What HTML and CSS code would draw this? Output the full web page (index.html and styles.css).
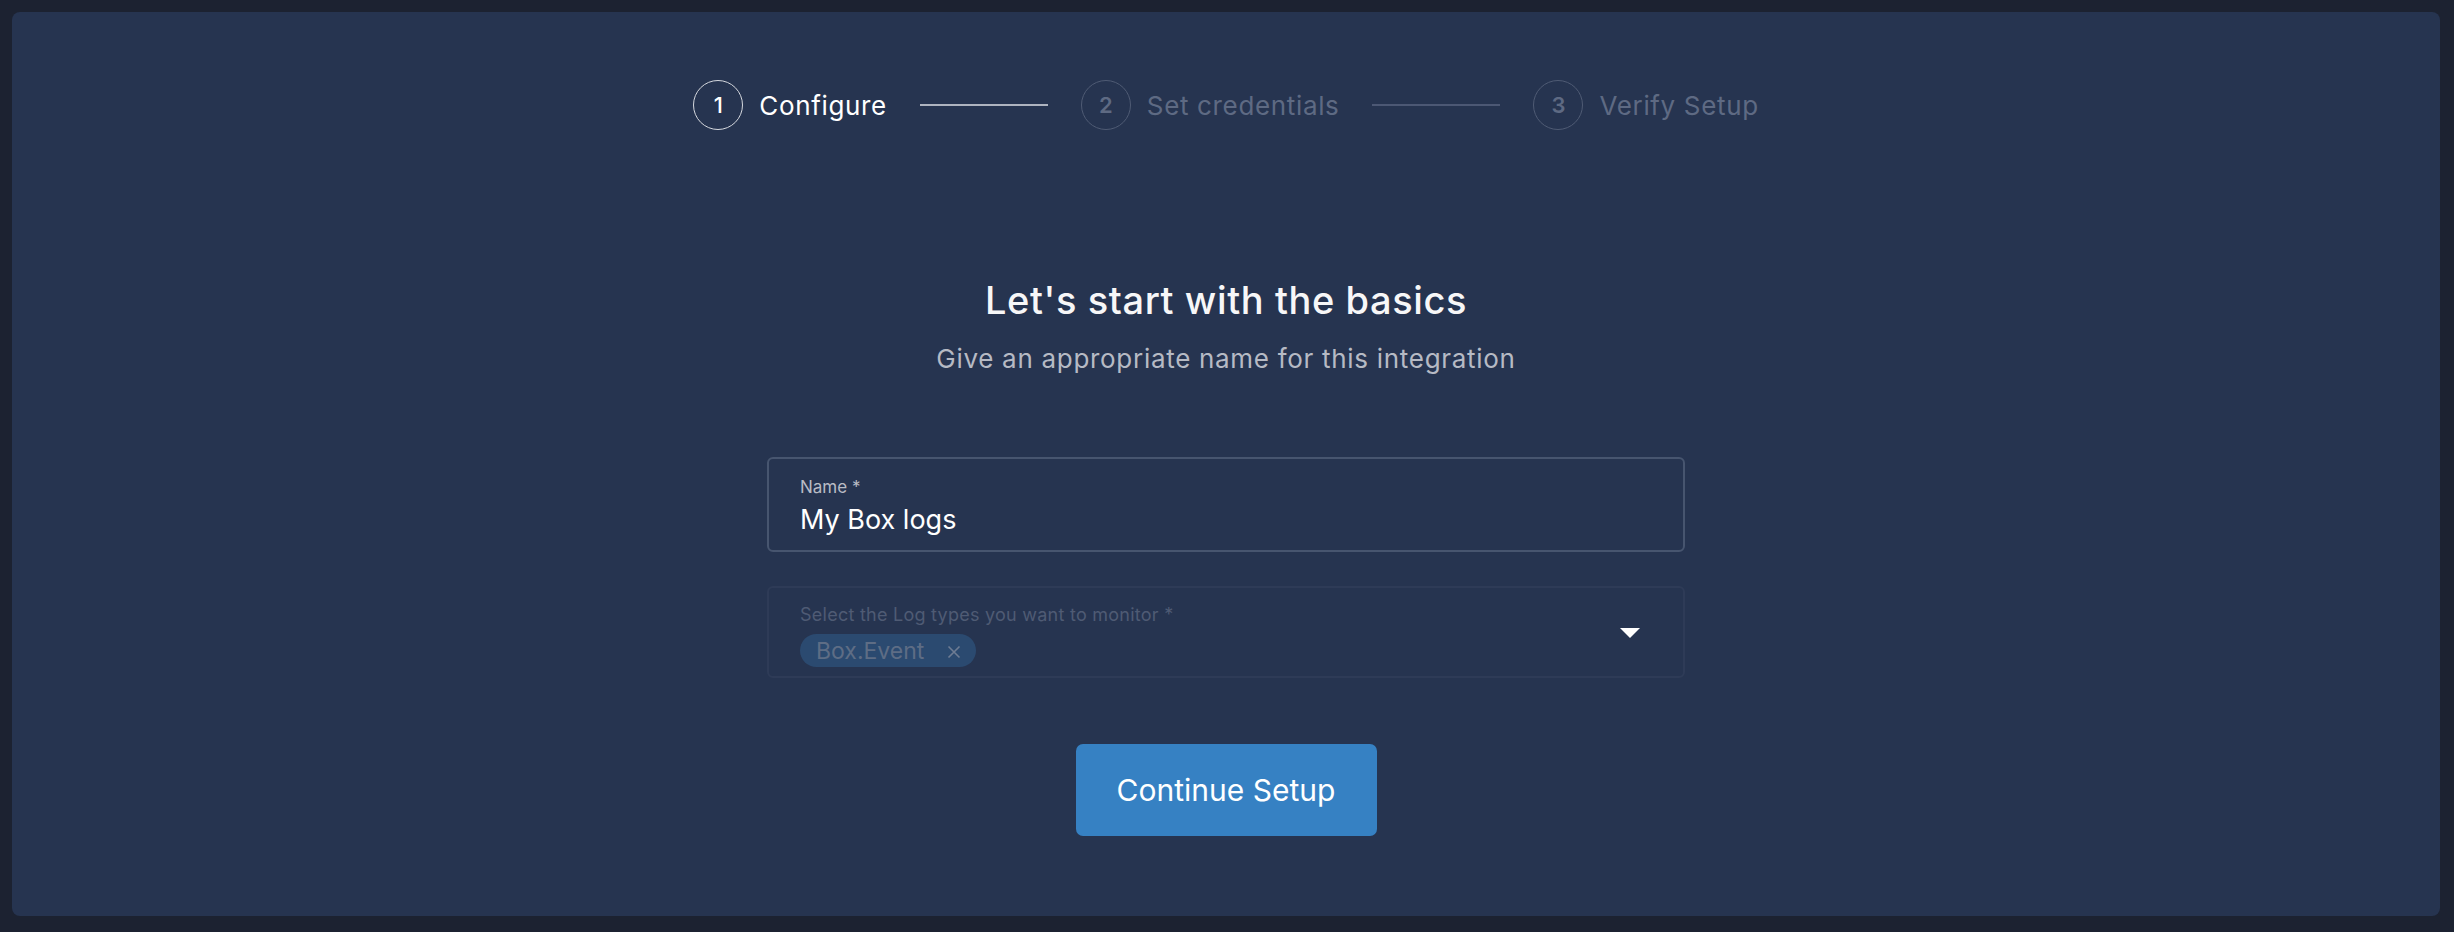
FILE: index.html
```html
<!DOCTYPE html>
<html lang="en">
<head>
<meta charset="utf-8">
<title>Configure integration</title>
<link rel="stylesheet" href="styles.css">
</head>
<body>
<main class="panel">
  <nav class="stepper">
    <div class="step active"><span class="step-num">1</span><span class="step-label">Configure</span></div>
    <span class="step-line done"></span>
    <div class="step"><span class="step-num">2</span><span class="step-label">Set credentials</span></div>
    <span class="step-line"></span>
    <div class="step"><span class="step-num">3</span><span class="step-label">Verify Setup</span></div>
  </nav>

  <h1 class="title">Let's start with the basics</h1>
  <p class="subtitle">Give an appropriate name for this integration</p>

  <form class="form">
    <label class="field">
      <span class="field-label">Name *</span>
      <span class="field-value">My Box logs</span>
    </label>
    <div class="field select disabled">
      <div class="select-body">
        <span class="field-label">Select the Log types you want to monitor *</span>
        <span class="chip">Box.Event<svg class="chip-x" viewBox="0 0 16 16" width="16" height="16"><path d="M2.5 2.5 L13.5 13.5 M13.5 2.5 L2.5 13.5" stroke="currentColor" stroke-width="1.6" fill="none"/></svg></span>
      </div>
      <svg class="caret" viewBox="0 0 20 10" width="20" height="10"><path d="M0 0 H20 L10 10 Z" fill="#ffffff"/></svg>
    </div>
    <button type="button" class="btn">Continue Setup</button>
  </form>
</main>
</body>
</html>
```

FILE: styles.css
```css
* { box-sizing: border-box; }
html, body { margin: 0; height: 100%; }
body {
  background: #1c2231;
  padding: 12px 14px 16px 12px;
  font-family: Inter, "Open Sans", sans-serif;
  color: #fff;
}
.panel {
  height: 904px;
  background: #263450;
  border-radius: 8px;
  display: flex;
  flex-direction: column;
  align-items: center;
}
.stepper {
  margin-top: 68px;
  display: flex;
  align-items: center;
}
.step {
  display: flex;
  align-items: center;
  gap: 16px;
  color: #5e6a83;
}
.step-num {
  width: 50px;
  height: 50px;
  border-radius: 50%;
  border: 1.5px solid #4f5b74;
  display: flex;
  align-items: center;
  justify-content: center;
  font-size: 22px;
  font-weight: 600;
}
.step-label {
  font-size: 26px;
  letter-spacing: 0.65px;
}
.step.active { color: #ffffff; }
.step.active .step-num { border-color: #d5d8de; font-weight: 500; }
.step-line {
  width: 128px;
  height: 2px;
  margin: 0 33px;
  background: #4c5874;
}
.step-line.done { background: #aeb4c0; }
.title {
  margin: 150px 0 0;
  font-size: 38px;
  letter-spacing: 0.6px;
  line-height: 40px;
  font-weight: 500;
  color: #f7f7f8;
}
.subtitle {
  margin: 24px 0 0;
  font-size: 26px;
  letter-spacing: 0.7px;
  line-height: 30px;
  color: #b6bac4;
}
.form {
  margin-top: 83px;
  width: 918px;
  display: flex;
  flex-direction: column;
  align-items: center;
}
.field {
  width: 100%;
  height: 95px;
  border: 2px solid #47556f;
  border-radius: 6px;
  padding: 18px 31px 0;
  display: flex;
  flex-direction: column;
}
.field-label {
  font-size: 17px;
  line-height: 20px;
  color: #b9bcc5;
}
.field-value {
  margin-top: 8px;
  font-size: 27px;
  line-height: 30px;
  color: #ffffff;
}
.select {
  margin-top: 34px;
  height: 92px;
  border-color: #2e3b57;
  flex-direction: row;
  align-items: center;
  justify-content: space-between;
  padding: 0 43px 0 31px;
}
.select-body {
  display: flex;
  flex-direction: column;
  align-items: flex-start;
  padding-top: 8px;
}
.select .field-label {
  color: #4f5b74;
  font-size: 18px;
  letter-spacing: 0.25px;
}
.chip {
  margin-top: 9px;
  height: 33px;
  padding: 0 14px 0 16px;
  border-radius: 17px;
  background: #2b4a70;
  color: #5e6d85;
  font-size: 23px;
  display: flex;
  align-items: center;
  gap: 22px;
}
.chip-x { color: #6e7c93; margin-top: 2px; }
.caret { margin-top: 2px; }
.btn {
  margin-top: 66px;
  width: 301px;
  height: 92px;
  border: none;
  border-radius: 7px;
  background: #3681c3;
  color: #fff;
  font-family: inherit;
  font-size: 30px;
}
```
